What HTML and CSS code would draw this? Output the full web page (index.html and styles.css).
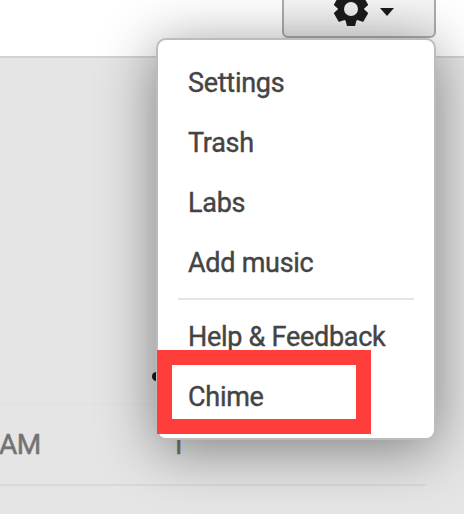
FILE: index.html
```html
<!DOCTYPE html>
<html lang="en">
<head>
<meta charset="utf-8">
<title>Music</title>
<link rel="stylesheet" href="styles.css">
</head>
<body>
<div class="app">
  <header class="header">
    <button class="settings" aria-label="Settings menu">
      <svg class="gear" viewBox="-18 -18 36 36" width="36" height="36">
        <g fill="#1b1b1b" stroke="#1b1b1b" stroke-width="1.4" stroke-linejoin="round">
          <circle r="12.2"/>
          <path d="M-4.8-11 L-3.5-16.3 H3.5 L4.8-11Z"/>
          <path transform="rotate(60)" d="M-5.6-11 L-4.6-16.3 H4.6 L5.6-11Z"/>
          <path transform="rotate(120)" d="M-5.6-11 L-4.6-16.3 H4.6 L5.6-11Z"/>
          <path transform="rotate(180)" d="M-4.8-11 L-3.5-16.3 H3.5 L4.8-11Z"/>
          <path transform="rotate(240)" d="M-5.6-11 L-4.6-16.3 H4.6 L5.6-11Z"/>
          <path transform="rotate(300)" d="M-5.6-11 L-4.6-16.3 H4.6 L5.6-11Z"/>
        </g>
        <circle r="7" fill="#eee"/>
      </svg>
      <svg class="caret" viewBox="0 0 14 8" width="14" height="8"><path d="M0 0H14L7 8Z" fill="#1b1b1b"/></svg>
    </button>
  </header>
  <main class="content">
    <div class="track"><span class="time">AM</span><span class="plays">1</span></div>
  </main>
  <span class="dot"></span>
  <nav class="menu">
    <a class="item">Settings</a>
    <a class="item">Trash</a>
    <a class="item">Labs</a>
    <a class="item">Add music</a>
    <hr class="divider">
    <a class="item">Help &amp; Feedback</a>
    <a class="item">Chime</a>
  </nav>
  <div class="highlight"></div>
</div>
</body>
</html>
```
FILE: styles.css
```css
* { box-sizing: border-box; }
body { margin: 0; font-family: Roboto, sans-serif; }
.app {
  position: relative;
  width: 464px;
  height: 514px;
  overflow: hidden;
  background: #e5e5e5;
}
.header {
  display: flex;
  justify-content: flex-end;
  align-items: flex-start;
  height: 58px;
  padding-right: 28px;
  background: #fff;
  border-bottom: 2px solid #d2d2d2;
}
.settings {
  display: flex;
  align-items: flex-start;
  width: 154px;
  height: 56px;
  margin-top: -18px;
  padding: 7px 0 0 49px;
  border: 2px solid #acacac;
  border-radius: 6px;
  background: linear-gradient(#fafafa, #ececec);
}
.gear { flex: none; }
.caret { margin: 17px 0 0 11px; }
.content { padding-top: 345px; }
.track {
  display: flex;
  width: 426px;
  height: 83px;
  border-top: 1px solid #e1e1e1;
  border-bottom: 2px solid #d9d9d9;
  color: #737373;
  font-size: 28px;
  letter-spacing: -.5px;
  line-height: 81px;
  -webkit-text-stroke: .5px #737373;
}
.time { width: 171px; margin-left: -1px; }
.dot {
  position: absolute;
  left: 152px;
  top: 372px;
  width: 9px;
  height: 9px;
  border-radius: 50%;
  background: #1b1b1b;
}
.menu {
  position: absolute;
  left: 156px;
  top: 38px;
  width: 280px;
  height: 402px;
  padding: 13px 20px;
  border: 2px solid #bcbcbc;
  border-radius: 10px;
  background: #fff;
  box-shadow: 0 9px 58px rgba(0, 0, 0, .45);
}
.item {
  display: block;
  height: 60px;
  padding-left: 10px;
  color: #444;
  font-size: 27px;
  letter-spacing: -.28px;
  line-height: 60px;
  white-space: nowrap;
  -webkit-text-stroke: .4px #444;
}
.divider {
  height: 2px;
  margin: 5px 0 7px;
  border: 0;
  background: #e5e5e5;
}
.highlight {
  position: absolute;
  left: 157px;
  top: 350px;
  width: 214px;
  height: 84px;
  border: 15px solid #ff3d3a;
}
```
